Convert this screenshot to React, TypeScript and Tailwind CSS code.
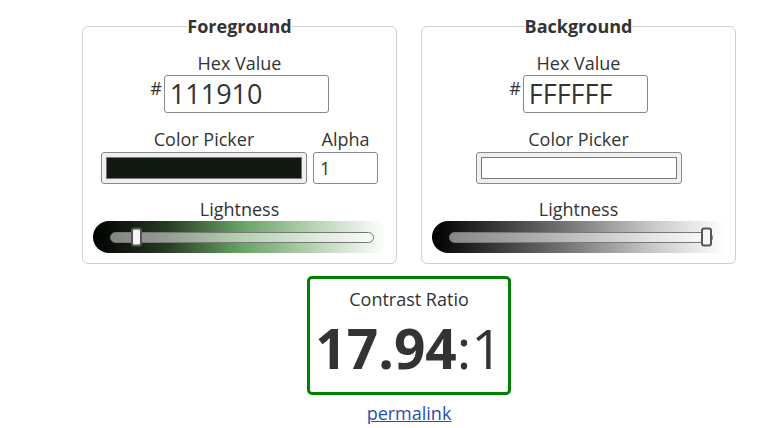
import React from 'react';

type Panel = {
  title: string;
  hex: string;
  swatch: string;
  alpha?: string;
  gradient: string;
  thumb: number; // 0..1 lightness
  hexWidth: string;
};

const panels: Panel[] = [
  {
    title: 'Foreground',
    hex: '111910',
    swatch: '#111910',
    alpha: '1',
    gradient: 'linear-gradient(to right, #000 0%, #253b23 25%, #67a062 50%, #b6d2b3 75%, #fff 100%)',
    thumb: 0.08,
    hexWidth: 'w-[165px]',
  },
  {
    title: 'Background',
    hex: 'FFFFFF',
    swatch: '#ffffff',
    gradient: 'linear-gradient(to right, #000 0%, #404040 25%, #808080 50%, #c8c8c8 75%, #fff 100%)',
    thumb: 1,
    hexWidth: 'w-[125px]',
  },
];

function LightnessSlider({ gradient, thumb }: { gradient: string; thumb: number }) {
  return (
    <div className="mx-auto flex h-[32px] w-[293px] items-center rounded-l-full pl-[17px] pr-[12px]" style={{ background: gradient }}>
      <div className="relative h-[11px] w-full rounded-full border border-[#777] bg-white/50">
        {/* poignée */}
        <div
          className="absolute top-1/2 h-[19px] w-[11px] -translate-y-1/2 rounded-[3px] border-2 border-[#555] bg-[#f4f4f4]"
          style={{ left: `calc(${thumb} * (100% - 11px))` }}
        />
      </div>
    </div>
  );
}

function ColorPanel({ p }: { p: Panel }) {
  return (
    <fieldset className="w-[315px] rounded-md border border-[#cfcfcf] pb-[10px]">
      <legend className="mx-auto px-0 text-[18px] font-bold leading-[24px]">{p.title}</legend>

      <div className="mt-[13px] text-center leading-[24px]">Hex Value</div>
      <div className="flex justify-center">
        <span className="mr-[2px] mt-[4px] text-[18px] leading-none">#</span>
        <div className={`${p.hexWidth} h-[38px] rounded-[3px] border border-[#888] pl-[5px] text-[27px] leading-[36px]`}>
          {p.hex}
        </div>
      </div>

      <div className="mt-[14px] flex items-end justify-center gap-[6px]">
        <div className="flex flex-col items-center">
          <div className="leading-[24px]">Color Picker</div>
          <div className="mt-[1px] h-[32px] w-[206px] rounded-[3px] border border-[#8a8a8a] bg-[#efefef] p-[4px]">
            <div className="h-full w-full border border-[#777]" style={{ background: p.swatch }} />
          </div>
        </div>
        {p.alpha && (
          <div className="flex flex-col items-center">
            <div className="leading-[24px]">Alpha</div>
            <div className="mt-[1px] h-[32px] w-[65px] rounded-[3px] border border-[#888] pl-[6px] leading-[30px]">
              {p.alpha}
            </div>
          </div>
        )}
      </div>

      <div className="mt-[13px] text-center leading-[24px]">Lightness</div>
      <LightnessSlider gradient={p.gradient} thumb={p.thumb} />
    </fieldset>
  );
}

export default function App() {
  return (
    <div className="min-h-[428px] bg-white pl-[60px] pt-[14px] text-[18px] text-[#333]" style={{ fontFamily: '"Open Sans", sans-serif' }}>
      <div className="flex justify-center gap-[24px]">
        {panels.map((p) => (
          <ColorPanel key={p.title} p={p} />
        ))}
      </div>

      {/* Ratio de contraste */}
      <div className="mx-auto mt-[12px] flex h-[119px] w-[204px] flex-col items-center rounded-[5px] border-[3px] border-[#008000] pt-[8px]">
        <div className="leading-[24px]">Contrast Ratio</div>
        <div className="mt-[2px] text-[55px] leading-[70px]">
          <span className="font-bold">17.94</span>:1
        </div>
      </div>
      <div className="mt-[6px] text-center leading-[24px]">
        <a href="#" className="text-[#2a4eb0] underline">permalink</a>
      </div>
    </div>
  );
}
